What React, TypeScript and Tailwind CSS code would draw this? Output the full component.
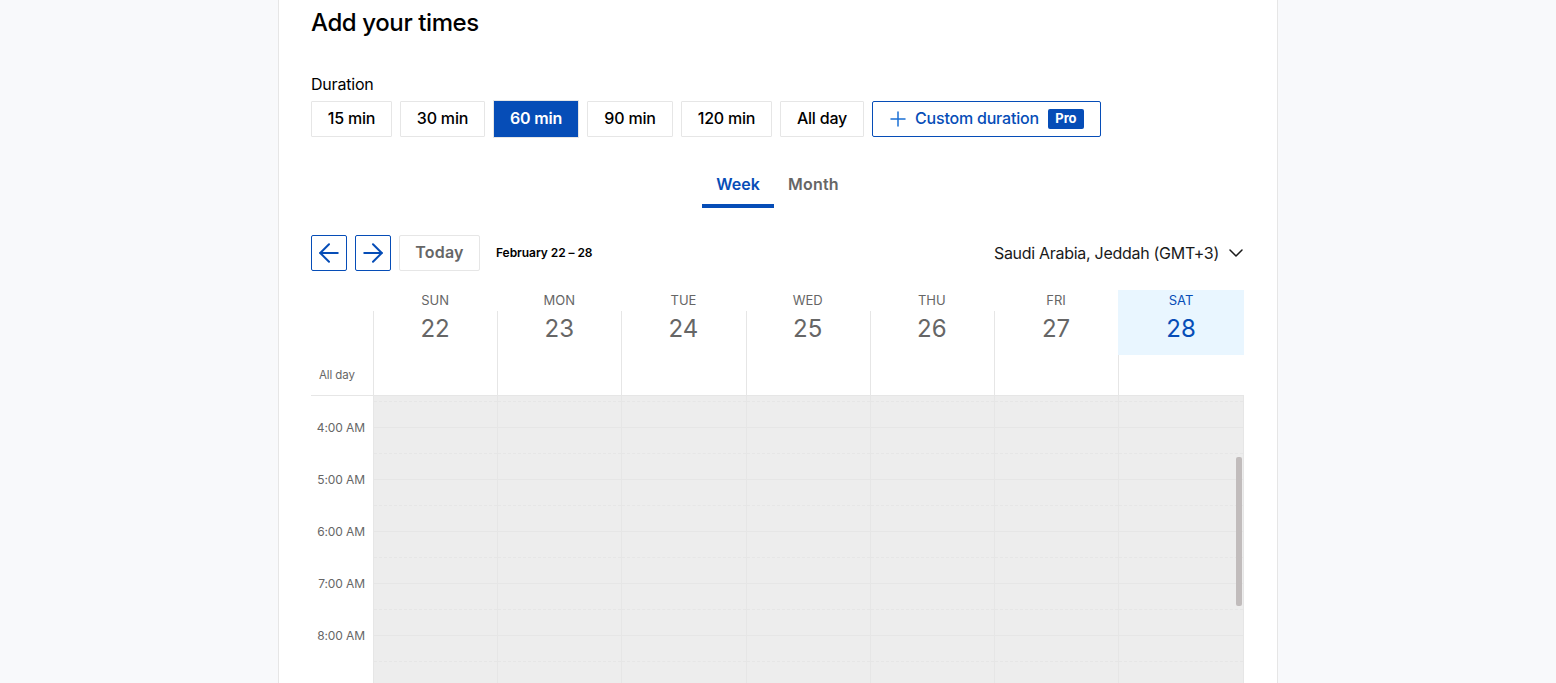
import { ArrowLeft, ArrowRight, ChevronDown, Plus } from 'lucide-react';

const durations = [
  { label: '15 min', width: 'w-[81px]' },
  { label: '30 min', width: 'w-[85px]' },
  { label: '60 min', width: 'w-[86px]', active: true },
  { label: '90 min', width: 'w-[86px]' },
  { label: '120 min', width: 'w-[91px]' },
  { label: 'All day', width: 'w-[84px]' },
];

const days = [
  { name: 'SUN', date: 22 },
  { name: 'MON', date: 23 },
  { name: 'TUE', date: 24 },
  { name: 'WED', date: 25 },
  { name: 'THU', date: 26 },
  { name: 'FRI', date: 27 },
  { name: 'SAT', date: 28, today: true },
];

const hours = ['4:00 AM', '5:00 AM', '6:00 AM', '7:00 AM', '8:00 AM'];

export default function App() {
  return (
    <div className="h-screen overflow-hidden bg-[#f8f9fb] font-['Inter',sans-serif] text-black">
      <div className="ml-[278px] h-full w-[1000px] border-x border-[#e6e6e6] bg-white px-[32px]">
        <h1 className="pt-[8px] text-[24px] leading-[30px] font-medium tracking-[-0.4px]">Add your times</h1>

        {/* Duration */}
        <div className="mt-[36px] text-[16px] leading-[20px] tracking-[-0.2px]">Duration</div>
        <div className="mt-[6px] flex h-[38px] items-center gap-[8px]">
          {durations.map((d) =>
            d.active ? (
              <button
                key={d.label}
                className={`${d.width} h-[38px] border border-[#e6e6e6] bg-[#064db7] pb-[2px] text-[16px] font-semibold tracking-[-0.2px] text-white`}
              >
                {d.label}
              </button>
            ) : (
              <button
                key={d.label}
                className={`${d.width} h-[36px] rounded-[1px] border border-[#e6e6e6] bg-white pb-[2px] text-[16px] font-[550] tracking-[-0.2px]`}
              >
                {d.label}
              </button>
            ),
          )}
          <button className="flex h-[36px] w-[229px] items-center rounded-[2px] border border-[#064db7] pl-[13px] text-[16px] font-[550] tracking-[-0.2px] text-[#064db7]">
            <Plus className="mr-[5px] h-[24px] w-[24px]" strokeWidth={1.5} color="#1a6fd4" />
            <span className="pb-[2px]">Custom duration</span>
            <span className="ml-[9px] flex h-[20px] w-[36px] items-center justify-center rounded-[2px] bg-[#064db7] text-[13px] font-bold tracking-normal text-white">
              Pro
            </span>
          </button>
        </div>

        {/* Tabs */}
        <div className="mt-[28px] flex justify-center pr-[14px] text-[16px] font-semibold">
          <div className="flex h-[42px] w-[72px] justify-center border-b-4 border-[#064db7] pt-[6px] text-[#064db7]">Week</div>
          <div className="ml-[14px] w-[52px] pt-[6px] tracking-[0.2px] text-[#666666]">Month</div>
        </div>

        {/* Calendar toolbar */}
        <div className="mt-[27px] flex h-[36px] items-center">
          <button className="flex h-[36px] w-[36px] items-center justify-center rounded-[2px] border border-[#064db7] text-[#064db7]">
            <ArrowLeft className="h-[30px] w-[30px] shrink-0" strokeWidth={1.6} />
          </button>
          <button className="ml-[8px] flex h-[36px] w-[36px] items-center justify-center rounded-[2px] border border-[#064db7] text-[#064db7]">
            <ArrowRight className="h-[30px] w-[30px] shrink-0" strokeWidth={1.6} />
          </button>
          <button className="ml-[8px] h-[36px] w-[81px] rounded-[2px] border border-[#e6e6e6] pb-[2px] text-[16px] font-semibold tracking-[0.2px] text-[#666666]">
            Today
          </button>
          <span className="ml-[16px] text-[12px] font-semibold tracking-[-0.06px]">February 22 – 28</span>
          <div className="ml-auto flex items-center text-[16px] tracking-[-0.29px] text-[#1a1a1a]">
            Saudi Arabia, Jeddah (GMT+3)
            <ChevronDown className="mr-[-3px] ml-[5px] h-[24px] w-[24px]" strokeWidth={1.5} />
          </div>
        </div>

        {/* Week grid */}
        <div className="relative mt-[19px] w-[933px]">
          <div className="grid h-[106px] grid-cols-[62px_repeat(6,124.2px)_125.8px] border-b border-[#e6e6e6]">
            <div className="flex items-end pb-[13px] pl-[8px] text-[11.5px] leading-[14px] tracking-[-0.1px] text-[#666666]">All day</div>
            {days.map((d) => (
              <div key={d.name} className="relative text-center">
                <div className="absolute top-[21px] bottom-0 left-0 w-px bg-[#e6e6e6]" />
                <div
                  className={
                    d.today
                      ? 'relative h-[65px] bg-[#e9f6ff] text-[#064db7]'
                      : 'relative h-[65px] text-[#666666]'
                  }
                >
                  <div className="pt-[2px] text-[13px] leading-[16px]">{d.name}</div>
                  <div className="mt-[6px] text-[24px] leading-[30px]">{d.date}</div>
                </div>
              </div>
            ))}
          </div>

          <div className="grid grid-cols-[62px_repeat(6,124.2px)_125.8px]">
            <div className="pt-[6px] pr-[8px]">
              {hours.map((h) => (
                <div key={h} className="flex h-[52px] items-center justify-end text-[12px] tracking-[-0.1px] whitespace-nowrap text-[#666666]">
                  {h}
                </div>
              ))}
            </div>
            {days.map((d) => (
              <div key={d.name} className="h-[340px] border-l border-[#e6e6e6] bg-[#ededed] last:border-r">
                <div className="h-[6px] border-b border-dashed border-[#e6e6e6]" />
                {[...hours, 'end'].map((h) => (
                  <div key={h}>
                    <div className="h-[26px] border-b border-[#e6e6e6]" />
                    <div className="h-[26px] border-b border-dashed border-[#e6e6e6]" />
                  </div>
                ))}
              </div>
            ))}
          </div>

          {/* scrollbar thumb */}
          <div className="absolute top-[167px] right-[2px] h-[149px] w-[6px] rounded-[2px] bg-[#c1bcbc]" />
        </div>
      </div>
    </div>
  );
}
